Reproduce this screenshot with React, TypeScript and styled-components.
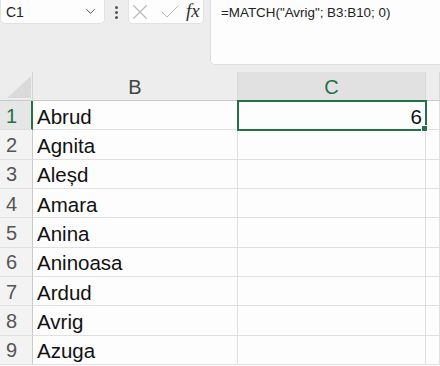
import React from "react";
import styled, { createGlobalStyle } from "styled-components";
import { ChevronDown, X, Check } from "lucide-react";

const Global = createGlobalStyle`
  html, body { margin: 0; padding: 0; }
  body { background: #ededed; font-family: "Liberation Sans", Arial, sans-serif; }
`;

const GREEN = "#217346";

const Page = styled.div`
  width: 440px;
  height: 366px;
  overflow: hidden;
  background: #ededed;
  display: flex;
  flex-direction: column;
`;

const Toolbar = styled.div`
  display: flex;
  align-items: flex-start;
  height: 66px;
  margin-bottom: 6px;
`;

const NameBox = styled.div`
  width: 105px;
  height: 24px;
  box-sizing: border-box;
  background: #fdfdfd;
  border: 1px solid #e2e2e2;
  border-top: none;
  border-radius: 0 0 5px 5px;
  display: flex;
  align-items: center;
  justify-content: space-between;
  padding: 0 6px 0 5px;
  font-size: 14px;
  color: #222;
`;

const Dots = styled.div`
  width: 23px;
  height: 24px;
  display: flex;
  flex-direction: column;
  align-items: center;
  justify-content: center;
  gap: 2px;
  & > span {
    width: 3px;
    height: 3px;
    border-radius: 50%;
    background: #555;
  }
`;

const Buttons = styled.div`
  width: 76px;
  height: 24px;
  box-sizing: border-box;
  background: #fdfdfd;
  border: 1px solid #e2e2e2;
  border-top: none;
  border-radius: 0 0 5px 5px;
  display: flex;
  align-items: center;
  padding: 0;
  overflow: hidden;
`;

const IconSlot = styled.span<{ $ml: number }>`
  display: flex;
  flex: none;
  margin-left: ${(p) => p.$ml}px;
`;

const Fx = styled.span`
  font-family: "Liberation Serif", "Times New Roman", serif;
  font-style: italic;
  font-size: 19px;
  color: #333;
  margin-left: 4px;
  margin-top: -2px;
`;

const FormulaBox = styled.div`
  margin-left: 6px;
  flex: 1;
  height: 65px;
  box-sizing: border-box;
  background: #fdfdfd;
  border: 1px solid #dedede;
  border-top: none;
  border-right: none;
  border-radius: 0 0 0 5px;
  padding: 5px 0 0 10px;
  font-size: 13.4px;
  color: #222;
`;

const Sheet = styled.div`
  flex: 1;
  display: grid;
  grid-template-columns: 33px 205px 188px 1fr;
  grid-template-rows: 29px repeat(9, 29.33px);
  background: #fdfdfd;
`;

const Corner = styled.div`
  background: #ededed;
  border-right: 1px solid #d4d4d4;
  border-bottom: 1px solid #c9c9c9;
  box-sizing: border-box;
  display: flex;
  align-items: flex-end;
  justify-content: flex-end;
  padding: 0 1px 2px 0;
`;

const ColHead = styled.div<{ $sel?: boolean }>`
  box-sizing: border-box;
  background: ${(p) => (p.$sel ? "#e1e1e1" : "#ededed")};
  color: ${(p) => (p.$sel ? GREEN : "#444")};
  border-right: 1px solid #d9d9d9;
  border-bottom: 1px solid ${(p) => (p.$sel ? GREEN : "#c9c9c9")};
  display: flex;
  align-items: center;
  justify-content: center;
  font-size: 20px;
  padding-top: 2px;
`;

const RowHead = styled.div<{ $sel?: boolean }>`
  box-sizing: border-box;
  background: ${(p) => (p.$sel ? "#e6e6e6" : "#f3f3f3")};
  color: ${(p) => (p.$sel ? GREEN : "#555")};
  border-right: ${(p) => (p.$sel ? `2px solid ${GREEN}` : "1px solid #c9c9c9")};
  border-bottom: 1px solid #e0e0e0;
  display: flex;
  align-items: center;
  padding: 2px 0 0 6px;
  font-size: 20px;
`;

const Cell = styled.div<{ $sel?: boolean; $num?: boolean }>`
  box-sizing: border-box;
  position: relative;
  border-right: 1px solid #e0e0e0;
  border-bottom: 1px solid #e0e0e0;
  display: flex;
  align-items: center;
  justify-content: ${(p) => (p.$num ? "flex-end" : "flex-start")};
  padding: 3px 3px 0 4px;
  font-size: 20.5px;
  color: #111;
  white-space: nowrap;
  ${(p) =>
    p.$sel
      ? `
    outline: 2px solid ${GREEN};
    outline-offset: -1px;
    z-index: 1;
    &::after {
      content: "";
      position: absolute;
      right: -3px;
      bottom: -3px;
      width: 5px;
      height: 5px;
      background: ${GREEN};
      border: 1px solid #fff;
    }
  `
      : ""}
`;

const names = ["Abrud", "Agnita", "Aleșd", "Amara", "Anina", "Aninoasa", "Ardud", "Avrig", "Azuga"];

export default function App() {
  return (
    <Page>
      <Global />
      <Toolbar>
        <NameBox>
          <span>C1</span>
          <ChevronDown size={15} strokeWidth={1.5} color="#444" />
        </NameBox>
        <Dots>
          <span />
          <span />
          <span />
        </Dots>
        <Buttons>
          <IconSlot $ml={-2}>
            <X size={26} strokeWidth={1} color="#b8b8b8" />
          </IconSlot>
          <IconSlot $ml={5}>
            <Check size={24} strokeWidth={1} color="#b8b8b8" />
          </IconSlot>
          <Fx>fx</Fx>
        </Buttons>
        <FormulaBox>=MATCH("Avrig"; B3:B10; 0)</FormulaBox>
      </Toolbar>
      <Sheet>
        <Corner>
          <svg width="24" height="22" viewBox="0 0 24 22">
            <polygon points="0,22 24,0 24,22" fill="#dadada" />
          </svg>
        </Corner>
        <ColHead>B</ColHead>
        <ColHead $sel>C</ColHead>
        <ColHead />
        {names.map((n, i) => (
          <React.Fragment key={n}>
            <RowHead $sel={i === 0}>{i + 1}</RowHead>
            <Cell>{n}</Cell>
            <Cell $sel={i === 0} $num>
              {i === 0 ? "6" : ""}
            </Cell>
            <Cell />
          </React.Fragment>
        ))}
      </Sheet>
    </Page>
  );
}
